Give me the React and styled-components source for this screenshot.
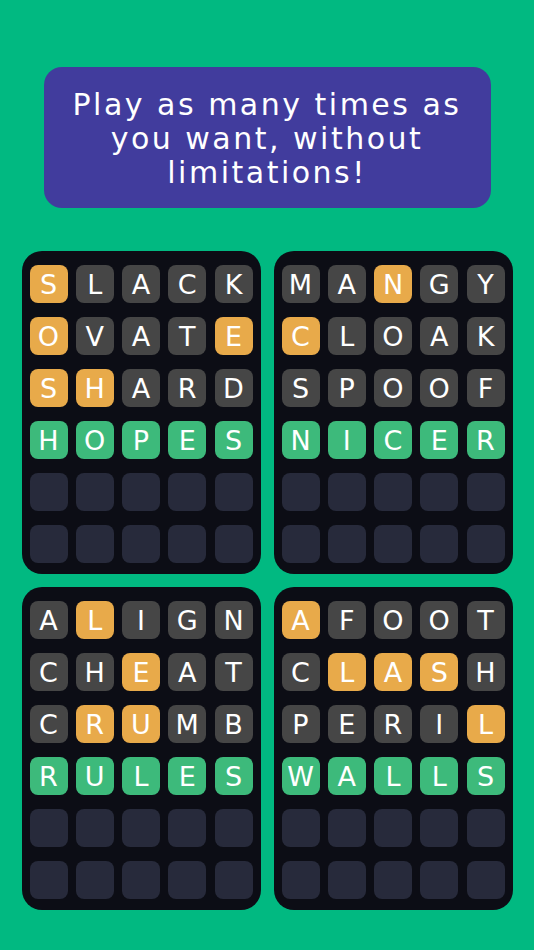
import styled, { createGlobalStyle } from "styled-components";

const GlobalStyle = createGlobalStyle`
  html, body {
    margin: 0;
    padding: 0;
    background: #01b981;
  }
  * {
    box-sizing: border-box;
  }
`;

const Page = styled.div`
  width: 534px;
  height: 950px;
  background: #01b981;
  display: flex;
  flex-direction: column;
  align-items: center;
  padding-top: 67px;
  font-family: "DejaVu Sans", "Noto Sans", sans-serif;
`;

const Banner = styled.div`
  width: 447px;
  height: 141px;
  background: #413c9d;
  border-radius: 18px;
  color: #ffffff;
  display: flex;
  align-items: center;
  justify-content: center;
  text-align: center;
  font-size: 30px;
  line-height: 34px;
  letter-spacing: 2.5px;
  padding: 2px 16px 0;
`;

const Boards = styled.div`
  margin-top: 43px;
  display: grid;
  grid-template-columns: 239px 239px;
  column-gap: 13px;
  row-gap: 13px;
`;

const Board = styled.div`
  background: #0c0d15;
  border-radius: 20px;
  padding: 14px 8px 11px;
  height: 323px;
  display: grid;
  grid-template-columns: repeat(5, 38px);
  grid-auto-rows: 38px;
  column-gap: 8.25px;
  row-gap: 14px;
`;

const tileColors = {
  y: "#e8aa4a",
  g: "#3dba7b",
  x: "#464646",
  e: "#272a3b",
};

const Tile = styled.div`
  background: ${(p) => tileColors[p.$state]};
  border-radius: 8px;
  color: #ffffff;
  font-size: 27px;
  display: flex;
  align-items: center;
  justify-content: center;
  line-height: 1;
`;

const boards = [
  [
    ["SLACK", "yxxxx"],
    ["OVATE", "yxxxy"],
    ["SHARD", "yyxxx"],
    ["HOPES", "ggggg"],
  ],
  [
    ["MANGY", "xxyxx"],
    ["CLOAK", "yxxxx"],
    ["SPOOF", "xxxxx"],
    ["NICER", "ggggg"],
  ],
  [
    ["ALIGN", "xyxxx"],
    ["CHEAT", "xxyxx"],
    ["CRUMB", "xyyxx"],
    ["RULES", "ggggg"],
  ],
  [
    ["AFOOT", "yxxxx"],
    ["CLASH", "xyyyx"],
    ["PERIL", "xxxxy"],
    ["WALLS", "ggggg"],
  ],
];

const GameBoard = ({ rows }) => {
  const tiles = [];
  rows.forEach(([word, states], r) => {
    word.split("").forEach((ch, c) => {
      tiles.push(
        <Tile key={`${r}-${c}`} $state={states[c]}>
          {ch}
        </Tile>
      );
    });
  });
  for (let i = 0; i < 10; i++) {
    tiles.push(<Tile key={`e-${i}`} $state="e" />);
  }
  return <Board>{tiles}</Board>;
};

const App = () => {
  return (
    <>
      <GlobalStyle />
      <Page>
        <Banner>Play as many times as you want, without limitations!</Banner>
        <Boards>
          {boards.map((rows, i) => (
            <GameBoard key={i} rows={rows} />
          ))}
        </Boards>
      </Page>
    </>
  );
};

export default App;
